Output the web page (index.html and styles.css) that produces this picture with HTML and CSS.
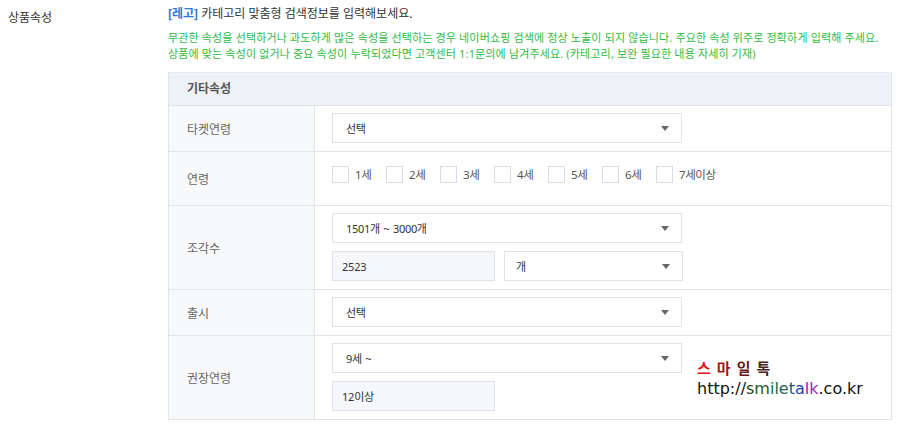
FILE: index.html
```html
<!DOCTYPE html>
<html lang="ko">
<head>
<meta charset="utf-8">
<title>상품속성</title>
<link rel="stylesheet" href="styles.css">
</head>
<body>
<div class="page">
  <div class="side-label">상품속성</div>
  <div class="content">
    <p class="intro"><span class="brand">[레고]</span> 카테고리 맞춤형 검색정보를 입력해보세요.</p>
    <p class="notice">무관한 속성을 선택하거나 과도하게 많은 속성을 선택하는 경우 네이버쇼핑 검색에 정상 노출이 되지 않습니다. 주요한 속성 위주로 정확하게 입력해 주세요.<br>상품에 맞는 속성이 없거나 중요 속성이 누락되었다면 고객센터 1:1문의에 남겨주세요. (카테고리, 보완 필요한 내용 자세히 기재)</p>
    <div class="attr-table">
      <div class="attr-head">기타속성</div>
      <div class="attr-row">
        <div class="attr-label">타켓연령</div>
        <div class="attr-cell">
          <div class="select wide"><span>선택</span><i class="caret"></i></div>
        </div>
      </div>
      <div class="attr-row">
        <div class="attr-label">연령</div>
        <div class="attr-cell checks">
          <label class="chk"><span class="box"></span>1세</label>
          <label class="chk"><span class="box"></span>2세</label>
          <label class="chk"><span class="box"></span>3세</label>
          <label class="chk"><span class="box"></span>4세</label>
          <label class="chk"><span class="box"></span>5세</label>
          <label class="chk"><span class="box"></span>6세</label>
          <label class="chk"><span class="box"></span>7세이상</label>
        </div>
      </div>
      <div class="attr-row">
        <div class="attr-label">조각수</div>
        <div class="attr-cell stack">
          <div class="select wide"><span>1501개 ~ 3000개</span><i class="caret"></i></div>
          <div class="pair">
            <div class="input">2523</div>
            <div class="select unit"><span>개</span><i class="caret"></i></div>
          </div>
        </div>
      </div>
      <div class="attr-row">
        <div class="attr-label">출시</div>
        <div class="attr-cell">
          <div class="select wide"><span>선택</span><i class="caret"></i></div>
        </div>
      </div>
      <div class="attr-row">
        <div class="attr-label">권장연령</div>
        <div class="attr-cell stack">
          <div class="select wide"><span>9세 ~</span><i class="caret"></i></div>
          <div class="pair">
            <div class="input">12이상</div>
          </div>
        </div>
      </div>
    </div>
  </div>
</div>
<div class="watermark">
  <div class="wm-title"><span class="w1">스</span><span class="w2">마</span><span class="w3">일</span><span class="w4">톡</span></div>
  <div class="wm-url">http://<span class="g1">s</span><span class="g2">m</span><span class="g3">i</span><span class="g4">l</span><span class="g5">e</span><span class="b1">t</span><span class="b2">a</span><span class="p1">l</span><span class="p2">k</span>.co.kr</div>
</div>
</body>
</html>
```

FILE: styles.css
```css
html, body {
  margin: 0;
  padding: 0;
  background: #ffffff;
}
body {
  font-family: "Noto Sans", "Noto Sans CJK KR", sans-serif;
  font-size: 12px;
  color: #333333;
  position: relative;
  width: 900px;
  height: 426px;
  overflow: hidden;
}
.page {
  display: flex;
  padding-left: 8px;
}
.side-label {
  width: 160px;
  padding-top: 10px;
  line-height: 16px;
  font-size: 12px;
  color: #333;
}
.content {
  width: 724px;
}
.intro {
  margin: 6px 0 0;
  line-height: 16px;
  font-size: 12px;
  color: #333;
}
.brand {
  color: #2d7ad6;
  font-weight: bold;
}
.notice {
  margin: 8px 0 0;
  line-height: 16px;
  font-size: 11px;
  letter-spacing: 0.15px;
  color: #2fbb42;
}
.attr-table {
  margin-top: 10px;
  border: 1px solid #e1e4e9;
  border-top-color: #e6e9ee;
}
.attr-head {
  height: 32px;
  line-height: 32px;
  padding-left: 18px;
  background: #eef1f6;
  font-weight: bold;
  color: #555;
}
.attr-row {
  display: grid;
  grid-template-columns: 146px 1fr;
  border-top: 1px solid #e1e4e9;
}
.attr-label {
  display: flex;
  align-items: center;
  padding-left: 18px;
  background: #f8f9fb;
  border-right: 1px solid #e1e4e9;
  color: #666;
}
.attr-cell {
  padding: 7px 0 8px 17px;
}
.stack {
  display: flex;
  flex-direction: column;
  gap: 8px;
}
.pair {
  display: flex;
  gap: 9px;
}
.select {
  box-sizing: border-box;
  height: 30px;
  border: 1px solid #dfe2e7;
  background: #fff;
  display: flex;
  align-items: center;
  justify-content: space-between;
  padding: 0 12px 0 13px;
  color: #333;
  font-size: 11px;
  letter-spacing: -0.3px;
  word-spacing: 1px;
}
.select.wide {
  width: 350px;
}
.select.unit {
  width: 179px;
  padding-left: 11px;
}
.caret {
  width: 0;
  height: 0;
  border-left: 4.5px solid transparent;
  border-right: 4.5px solid transparent;
  border-top: 5px solid #666;
}
.input {
  box-sizing: border-box;
  width: 163px;
  height: 30px;
  border: 1px solid #dfe2e7;
  background: #f5f7fa;
  display: flex;
  align-items: center;
  padding-left: 9px;
  color: #333;
  font-size: 11px;
  letter-spacing: -0.2px;
}
.checks {
  display: flex;
  align-items: flex-start;
  padding: 14px 0 22px 17px;
}
.chk {
  display: flex;
  align-items: center;
  width: 54px;
  color: #555;
  font-size: 11.5px;
  letter-spacing: -0.4px;
  line-height: 17px;
}
.chk:last-child {
  width: auto;
}
.box {
  box-sizing: border-box;
  width: 17px;
  height: 17px;
  border: 1px solid #d9dce1;
  background: #fff;
  margin-right: 6px;
}
.watermark {
  position: absolute;
  left: 697px;
  top: 357px;
  font-family: "DejaVu Sans", sans-serif;
}
.wm-title {
  display: flex;
  gap: 6px;
  height: 22px;
  font-family: "Noto Sans CJK KR", sans-serif;
  font-weight: bold;
  font-size: 15px;
  line-height: 22px;
}
.w1 { color: #e8141c; }
.w2 { color: #a8141c; }
.w3 { color: #6a1a1c; }
.w4 { color: #4a2424; }
.wm-url {
  font-size: 16px;
  line-height: 19px;
  color: #111;
}
.g1 { color: #1d4a1d; }
.g2 { color: #1e5a22; }
.g3 { color: #1f6a2a; }
.g4 { color: #1d6a3c; }
.g5 { color: #1e6456; }
.b1 { color: #1e5a7a; }
.b2 { color: #2240a8; }
.p1 { color: #7a2ab0; }
.p2 { color: #b020b0; }
```
